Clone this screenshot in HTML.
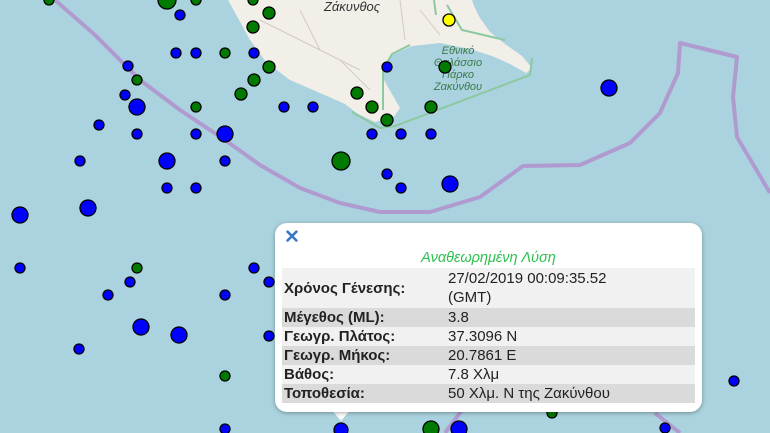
<!DOCTYPE html>
<html><head><meta charset="utf-8"><style>
html,body{margin:0;padding:0;width:770px;height:433px;overflow:hidden;background:#aad3df;font-family:"Liberation Sans",sans-serif}
svg{position:absolute;left:0;top:0}
.pop{position:absolute;left:275px;top:223px;width:427px;height:189px;background:#fff;border-radius:12px;box-shadow:0 1px 4px rgba(0,0,0,.35)}
.tip{position:absolute;left:331px;top:409px;width:0;height:0;border-left:10px solid transparent;border-right:10px solid transparent;border-top:12px solid #fff}
.x{position:absolute;left:9px;top:5px;color:#3a78c8;font-size:19px;font-weight:bold;line-height:20px}
.t{position:absolute;left:0;width:427px;top:27px;text-align:center;color:#2ec050;font-style:italic;font-size:14.5px}
table{position:absolute;left:7px;top:45px;width:413px;border-collapse:collapse;font-size:15px;color:#222}
td{padding:0 2px;vertical-align:middle;line-height:19px}
td.l{font-weight:bold;width:160px;white-space:nowrap}
tr:nth-child(odd){background:#f1f1f1}
tr:nth-child(even){background:#dadada}
</style></head><body>
<svg width="770" height="433" viewBox="0 0 770 433">
<rect width="770" height="433" fill="#aad3df"/>
<path d="M228,0 L238,18 L250,40 L266,62 L290,80 L320,93 L345,104 L358,114 L375,122 L393,118 L400,108 L392,94 L384,80 L382,66 L392,55 L412,46 L440,43 L470,49 L492,56 L510,64 L526,73 L532,68 L522,56 L505,44 L490,32 L480,18 L474,6 L472,0 Z" fill="#f2efe9"/>
<path d="M260,20 L300,40 L340,60 L370,90 M300,10 L320,50 L360,70 M400,0 L405,40 M420,10 L440,35" stroke="#d0ccc4" stroke-width="1" fill="none"/>
<path d="M352,112 L380,128 L395,126 L530,75 L532,58 M383,110 L383,70 L392,54 L410,45 M434,0 L436,15 M447,5 L462,30 L505,40" stroke="#8cc8a0" stroke-width="2" fill="none"/>
<g fill="#3d7a4a" font-size="11" font-style="italic" text-anchor="middle"><text x="458" y="54">Εθνικό</text><text x="458" y="66">Θαλάσσιο</text><text x="458" y="78">Πάρκο</text><text x="458" y="90">Ζακύνθου</text></g>
<text x="352" y="11" font-size="13" font-style="italic" fill="#333" text-anchor="middle">Ζάκυνθος</text>
<path d="M55,0 L95,35 L115,55 L140,80 L180,110 L225,140 L260,165 L300,188 L340,203 L380,212 L430,212 L480,197 L523,166 L580,165 L630,143 L660,113 L678,73 L680,43 L737,57 L733,97 L737,137 L770,193" stroke="#b09bd0" stroke-width="4" fill="none" stroke-linejoin="round"/>
<path d="M445,433 L462,410 M655,413 L680,433" stroke="#b09bd0" stroke-width="4"/>
<g stroke="#000" stroke-width="1.3">
<g fill="#0000ff">
<circle cx="180" cy="15" r="5"/><circle cx="176" cy="53" r="5"/><circle cx="196" cy="53" r="5"/><circle cx="254" cy="53" r="5"/><circle cx="128" cy="66" r="5"/><circle cx="125" cy="95" r="5"/><circle cx="137" cy="107" r="8"/><circle cx="99" cy="125" r="5"/><circle cx="137" cy="134" r="5"/><circle cx="196" cy="134" r="5"/><circle cx="225" cy="134" r="8"/><circle cx="80" cy="161" r="5"/><circle cx="167" cy="161" r="8"/><circle cx="225" cy="161" r="5"/><circle cx="167" cy="188" r="5"/><circle cx="196" cy="188" r="5"/><circle cx="20" cy="215" r="8"/><circle cx="88" cy="208" r="8"/>
<circle cx="387" cy="67" r="5"/><circle cx="284" cy="107" r="5"/><circle cx="313" cy="107" r="5"/><circle cx="372" cy="134" r="5"/><circle cx="401" cy="134" r="5"/><circle cx="431" cy="134" r="5"/><circle cx="387" cy="174" r="5"/><circle cx="401" cy="188" r="5"/><circle cx="450" cy="184" r="8"/><circle cx="609" cy="88" r="8"/>
<circle cx="20" cy="268" r="5"/><circle cx="130" cy="282" r="5"/><circle cx="108" cy="295" r="5"/><circle cx="254" cy="268" r="5"/><circle cx="269" cy="282" r="5"/><circle cx="225" cy="295" r="5"/><circle cx="141" cy="327" r="8"/><circle cx="179" cy="335" r="8"/><circle cx="79" cy="349" r="5"/><circle cx="269" cy="336" r="5"/><circle cx="225" cy="429" r="5"/><circle cx="734" cy="381" r="5"/><circle cx="665" cy="428" r="5"/><circle cx="341" cy="430" r="7"/><circle cx="459" cy="429" r="8"/>
</g>
<g fill="#007a00">
<circle cx="49" cy="0" r="5"/><circle cx="167" cy="0" r="9"/><circle cx="196" cy="0" r="5"/><circle cx="253" cy="0" r="5"/><circle cx="269" cy="13" r="6"/><circle cx="253" cy="27" r="6"/><circle cx="225" cy="53" r="5"/><circle cx="137" cy="80" r="5"/><circle cx="269" cy="67" r="6"/><circle cx="241" cy="94" r="6"/><circle cx="357" cy="93" r="6"/><circle cx="445" cy="67" r="6"/><circle cx="196" cy="107" r="5"/><circle cx="372" cy="107" r="6"/><circle cx="431" cy="107" r="6"/><circle cx="387" cy="120" r="6"/><circle cx="341" cy="161" r="9"/><circle cx="254" cy="80" r="6"/>
<circle cx="137" cy="268" r="5"/><circle cx="225" cy="376" r="5"/><circle cx="552" cy="413" r="5"/><circle cx="431" cy="429" r="8"/>
</g>
<circle cx="449" cy="20" r="6" fill="#ffff00"/>
</g>
</svg>
<div class="tip"></div>
<div class="pop">
<div class="x">✕</div>
<div class="t">Αναθεωρημένη Λύση</div>
<table>
<tr style="height:40px"><td class="l">Χρόνος Γένεσης:</td><td>27/02/2019 00:09:35.52<br>(GMT)</td></tr>
<tr><td class="l">Μέγεθος (ML):</td><td>3.8</td></tr>
<tr><td class="l">Γεωγρ. Πλάτος:</td><td>37.3096 N</td></tr>
<tr><td class="l">Γεωγρ. Μήκος:</td><td>20.7861 E</td></tr>
<tr><td class="l">Βάθος:</td><td>7.8 Χλμ</td></tr>
<tr><td class="l">Τοποθεσία:</td><td>50 Χλμ. N της Ζακύνθου</td></tr>
</table>
</div>
</body></html>
